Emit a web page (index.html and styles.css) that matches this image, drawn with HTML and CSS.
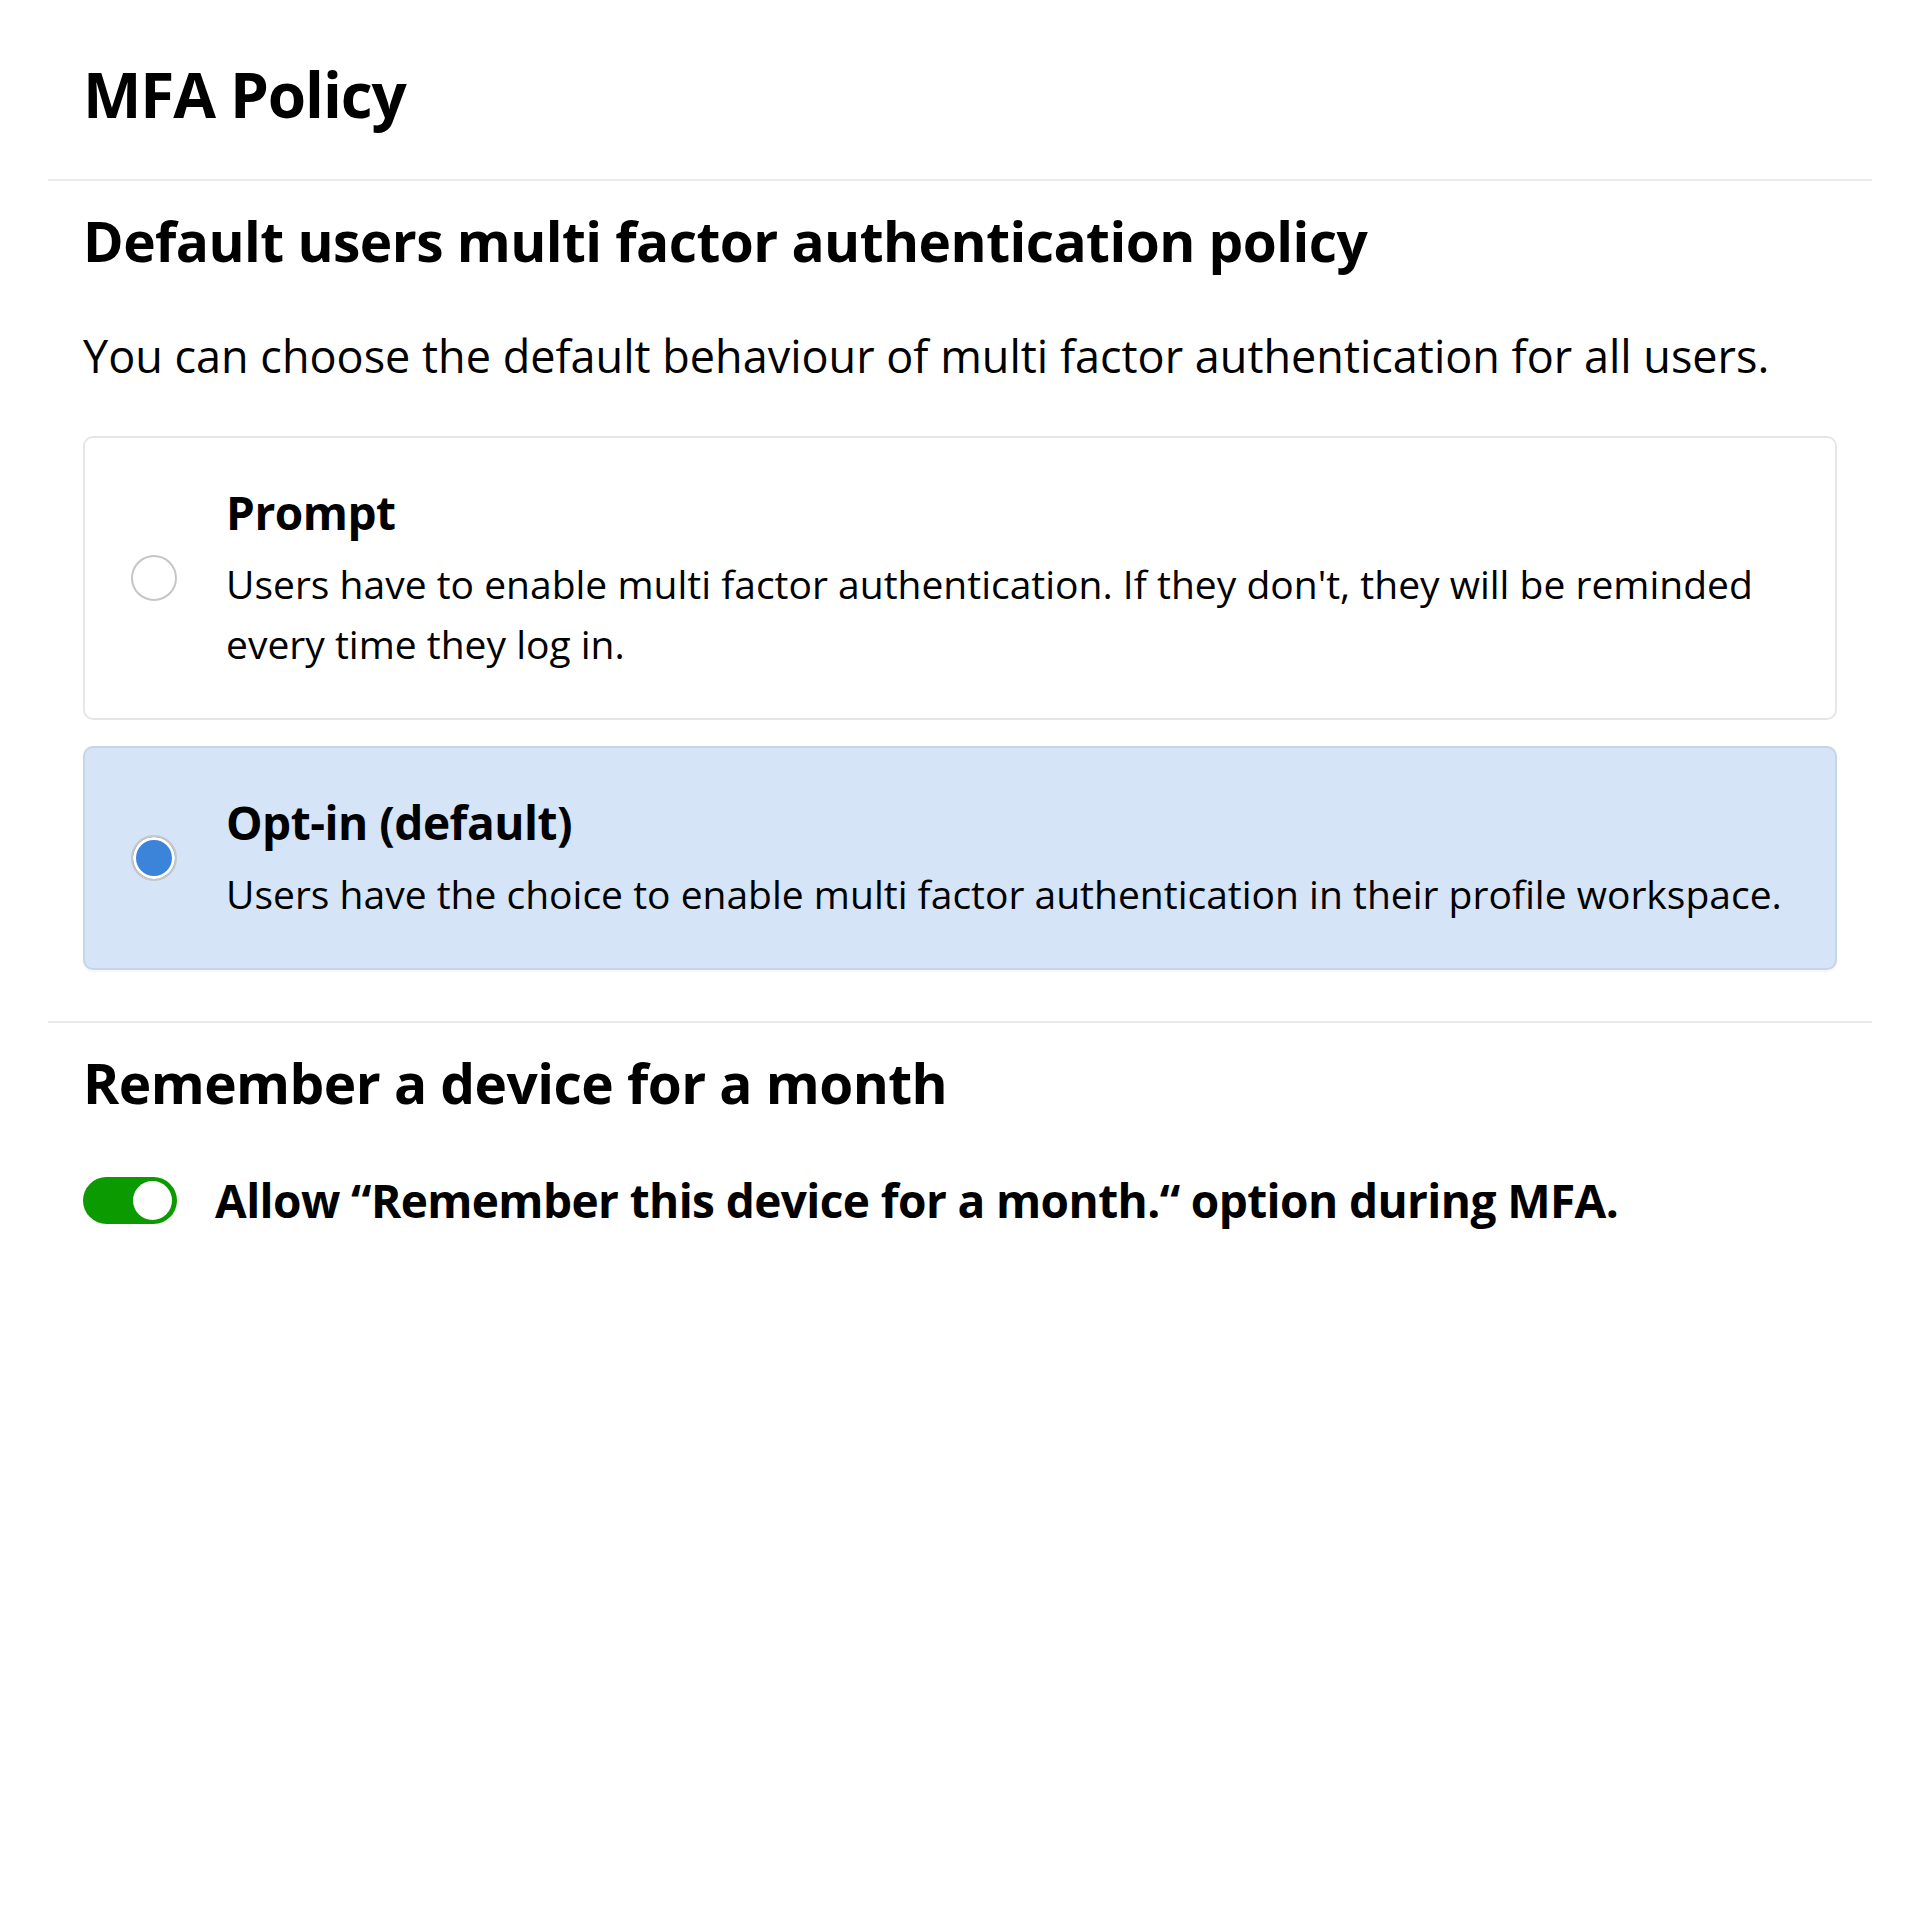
FILE: index.html
```html
<!DOCTYPE html>
<html lang="en">
<head>
  <meta charset="UTF-8" />
  <meta name="viewport" content="width=device-width, initial-scale=1.0"/>
  <title>MFA Policy</title>
  <link rel="stylesheet" href="styles.css">
</head>
<body>
  <div class="page-header">
    <h1>MFA Policy</h1>
  </div>

  <div class="section">
    <h2>Default users multi factor authentication policy</h2>
    <p class="intro">You can choose the default behaviour of multi factor authentication for all users.</p>

    <label class="option">
      <input type="radio" name="policy" value="prompt" />
      <div class="option-text">
        <div class="option-title">Prompt</div>
        <div class="option-desc">Users have to enable multi factor authentication. If they don't, they will be reminded every time they log in.</div>
      </div>
    </label>

    <label class="option selected">
      <input type="radio" name="policy" value="opt-in" checked />
      <div class="option-text">
        <div class="option-title">Opt-in (default)</div>
        <div class="option-desc">Users have the choice to enable multi factor authentication in their profile workspace.</div>
      </div>
    </label>
  </div>

  <div class="section last">
    <h2>Remember a device for a month</h2>
    <label class="toggle-row">
      <span class="toggle on"></span>
      <span class="toggle-label">Allow “Remember this device for a month.“ option during MFA.</span>
    </label>
  </div>
</body>
</html>
```

FILE: styles.css
```css
* {
  box-sizing: border-box;
}

body {
  margin: 0;
  padding: 0 48px;
  background: #fff;
  color: #000;
  font-family: 'Open Sans', 'Noto Sans', sans-serif;
}

.page-header {
  padding: 56px 35px 46px;
  border-bottom: 2px solid #ebebeb;
}

h1 {
  margin: 0;
  font-size: 62px;
  line-height: 77px;
  font-weight: 700;
  letter-spacing: -1.1px;
}

.section {
  padding: 26px 35px 51px;
  border-bottom: 2px solid #ebebeb;
}

.section.last {
  border-bottom: none;
}

h2 {
  margin: 0;
  font-size: 55px;
  line-height: 67px;
  font-weight: 700;
  letter-spacing: -0.55px;
}

.intro {
  margin: 48px 0 47px;
  font-size: 45px;
  line-height: 67px;
}

/* Radio cards */
.option {
  display: flex;
  align-items: center;
  gap: 49px;
  padding: 44px 40px 44px 46px;
  border: 2px solid #e6e6e6;
  border-radius: 10px;
  cursor: pointer;
}

.option + .option {
  margin-top: 26px;
}

.option.selected {
  background: #d5e4f6;
  border-color: #c6d5e7;
  box-shadow: 0 2px 2px rgba(0,0,0,0.04);
}

.option input {
  appearance: none;
  flex: none;
  width: 46px;
  height: 46px;
  margin: 0;
  border: 2px solid #c6c6c6;
  border-radius: 50%;
  background: #fff;
}

.option input:checked {
  background: #3b84da;
  box-shadow: inset 0 0 0 3px #fff;
}

.option-title {
  font-size: 46px;
  line-height: 60px;
  font-weight: 700;
  letter-spacing: -0.5px;
  margin-bottom: 12px;
}

.option-desc {
  font-size: 39px;
  line-height: 60px;
}

/* Toggle */
.toggle-row {
  display: flex;
  align-items: center;
  gap: 38px;
  margin-top: 54px;
}

.toggle {
  position: relative;
  flex: none;
  width: 94px;
  height: 47px;
  border-radius: 24px;
  background: #ccc;
}

.toggle::after {
  content: '';
  position: absolute;
  top: 4px;
  left: 5px;
  width: 39px;
  height: 39px;
  border-radius: 50%;
  background: #fff;
}

.toggle.on {
  background: #0b9a00;
}

.toggle.on::after {
  left: auto;
  right: 5px;
}

.toggle-label {
  font-size: 46px;
  line-height: 60px;
  font-weight: 700;
  letter-spacing: -0.6px;
}
```
